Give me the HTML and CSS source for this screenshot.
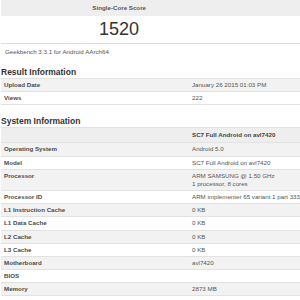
FILE: index.html
```html
<!DOCTYPE html>
<html lang="en">
<head>
    <meta charset="UTF-8">
    <title>Geekbench 3 Result</title>
    <link rel="stylesheet" href="styles.css">
</head>
<body>
    <div class="page">
        <div class="scores">
            <div class="scores-head">
                <div class="score-col">Single-Core Score</div>
                <div class="score-col"></div>
            </div>
            <div class="scores-body">
                <div class="score-col score">1520</div>
                <div class="score-col"></div>
            </div>
        </div>
        <p class="platform">Geekbench 3.3.1 for Android AArch64</p>

        <h2 class="section-title">Result Information</h2>
        <div class="info">
            <div class="row"><div class="name">Upload Date</div><div class="value">January 26 2015 01:03 PM</div></div>
            <div class="row"><div class="name">Views</div><div class="value">222</div></div>
        </div>

        <h2 class="section-title">System Information</h2>
        <div class="row head"><div class="name"></div><div class="value">SC7 Full Android on avl7420</div></div>
        <div class="info">
            <div class="row"><div class="name">Operating System</div><div class="value">Android 5.0</div></div>
            <div class="row"><div class="name">Model</div><div class="value">SC7 Full Android on avl7420</div></div>
            <div class="row"><div class="name">Processor</div><div class="value">ARM SAMSUNG @ 1.50 GHz<br>1 processor, 8 cores</div></div>
            <div class="row"><div class="name">Processor ID</div><div class="value">ARM implementer 65 variant 1 part 3335 revision 0</div></div>
            <div class="row"><div class="name">L1 Instruction Cache</div><div class="value">0 KB</div></div>
            <div class="row"><div class="name">L1 Data Cache</div><div class="value">0 KB</div></div>
            <div class="row"><div class="name">L2 Cache</div><div class="value">0 KB</div></div>
            <div class="row"><div class="name">L3 Cache</div><div class="value">0 KB</div></div>
            <div class="row"><div class="name">Motherboard</div><div class="value">avl7420</div></div>
            <div class="row"><div class="name">BIOS</div><div class="value"></div></div>
            <div class="row"><div class="name">Memory</div><div class="value">2873 MB</div></div>
        </div>
    </div>
</body>
</html>
```

FILE: styles.css
```css
body {
    margin: 0;
    overflow: hidden;
    background: #fff;
    font-family: "Liberation Sans", Arial, sans-serif;
    color: #444;
}

.page {
    width: 470px;
    padding: 0 1px;
}

.scores-head,
.scores-body {
    display: grid;
    grid-template-columns: 148px 1fr;
}

.scores-head {
    background: #eeeeee;
    height: 16px;
    font-size: 6.2px;
    font-weight: bold;
    line-height: 16px;
    color: #555;
}

.scores-head .score-col {
    text-align: right;
    padding-right: 3px;
}

.scores-body {
    height: 27px;
    border-bottom: 1px solid #dddddd;
}

.score {
    font-size: 18px;
    line-height: 27px;
    text-align: right;
    padding-right: 10px;
    color: #333;
}

.platform {
    margin: 0;
    padding: 4px 4px 0;
    font-size: 6.2px;
    line-height: 8px;
    color: #555;
}

.section-title {
    margin: 11px 0 1px;
    font-size: 8.5px;
    line-height: 10px;
    color: #333;
}

.info {
    border-bottom: 1px solid #e2e2e2;
}

.row {
    display: grid;
    grid-template-columns: 188px 1fr;
    border-top: 1px solid #e2e2e2;
    font-size: 6.2px;
    line-height: 8px;
    white-space: nowrap;
}

.info .row:nth-child(odd) {
    background: #f2f2f2;
}

.name,
.value {
    padding: 2.1px 3px;
}

.name {
    font-weight: bold;
    color: #4a4a4a;
}

.value {
    color: #555;
}

.head {
    background: #eeeeee;
}

.head .value {
    padding-top: 3px;
    padding-bottom: 3px;
    font-weight: bold;
    color: #444;
}
```
